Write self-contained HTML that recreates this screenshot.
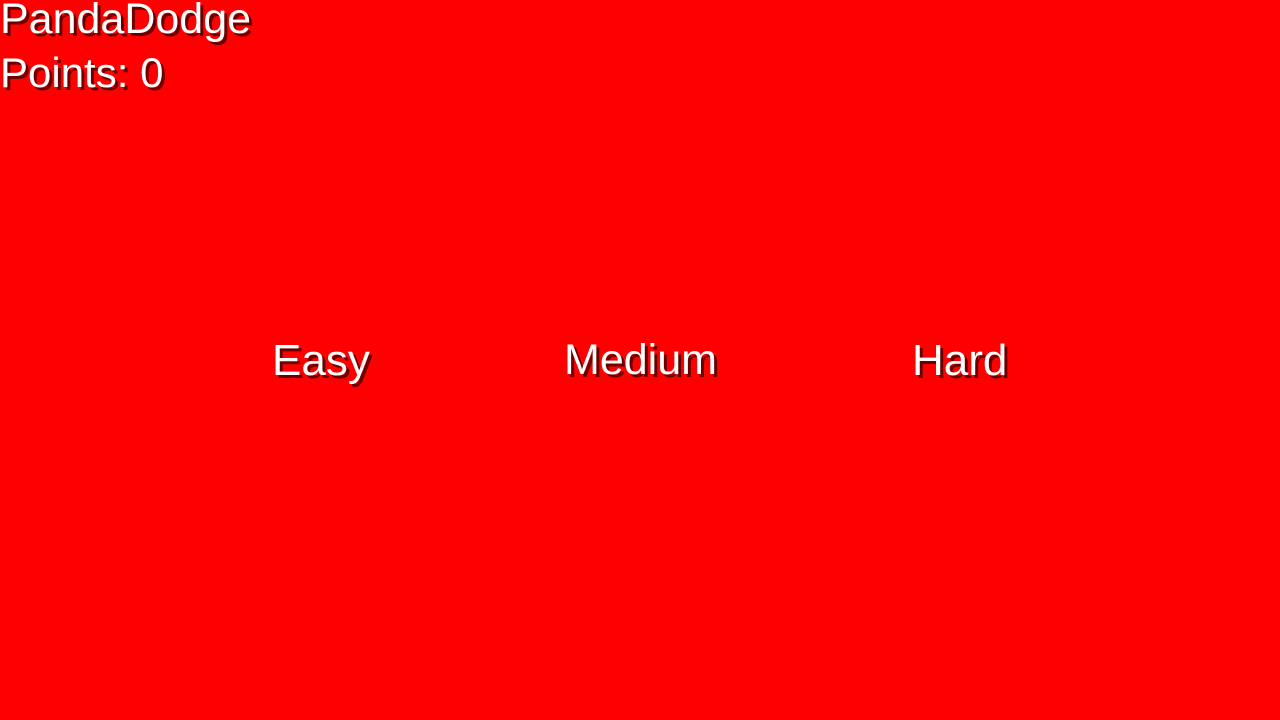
<!DOCTYPE html>
<html><head><style>
html,body{margin:0;padding:0;width:1280px;height:720px;background:#ff0000;overflow:hidden}
.t{position:absolute;font-family:"Liberation Sans",Arial,sans-serif;color:#fff;line-height:1;white-space:nowrap;text-shadow:3px 3px 0 #6a0000;}
</style></head><body>
<div class="t" style="left:0;top:-2px;font-size:43px">PandaDodge</div>
<div class="t" style="left:0;top:52px;font-size:42px">Points: 0</div>
<div class="t" style="left:272px;top:339px;font-size:44px">Easy</div>
<div class="t" style="left:564px;top:339px;font-size:43px">Medium</div>
<div class="t" style="left:912px;top:339px;font-size:44px">Hard</div>
</body></html>
